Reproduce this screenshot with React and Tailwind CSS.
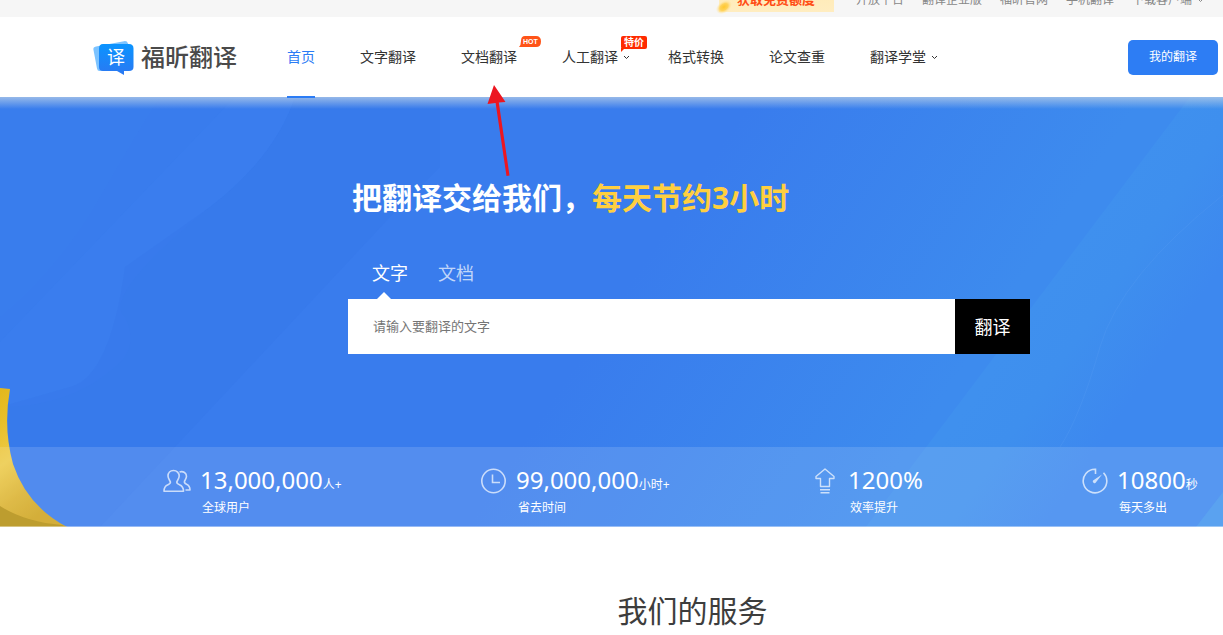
import React from 'react';

const topLinks = ['开放平台', '翻译企业版', '福昕官网', '手机翻译'];

const navItems = [
  { label: '首页', active: true },
  { label: '文字翻译' },
  { label: '文档翻译', badge: 'hot' },
  { label: '人工翻译', badge: 'sale', menu: true },
  { label: '格式转换' },
  { label: '论文查重' },
  { label: '翻译学堂', menu: true },
];

const stats = [
  { icon: UsersIcon, value: '13,000,000', unit: '人+', label: '全球用户' },
  { icon: ClockIcon, value: '99,000,000', unit: '小时+', label: '省去时间' },
  { icon: RiseIcon, value: '1200%', unit: '', label: '效率提升' },
  { icon: TimerIcon, value: '10800', unit: '秒', label: '每天多出' },
];

function UsersIcon() {
  return (
    <svg width="28" height="24" viewBox="0 0 28 24" fill="none" stroke="currentColor" strokeWidth="1.6" strokeLinejoin="round">
      <path d="M10.5 1.500C7.200 1.500 5 3.900 5 7.100C5 9.200 6.300 10.800 7.300 12.600C7.900 14.300 6.800 15 5 15.700C2.200 16.800 1 18.500 1 22.200H20.500C20.500 18.500 19.300 16.800 16.500 15.700C14.300 15 13.400 14.300 13.900 12.600C14.900 10.800 16.200 9.200 16.200 7.100C16.200 3.900 13.800 1.500 10.500 1.500Z" />
      <path d="M16.500 3C20.500 1.800 23.500 4.200 23.500 7.300C23.500 9.300 22.400 10.600 21.500 12.200C21 13.800 21.900 14.500 23.500 15.200C26 16.300 27 17.700 27 21H22.500" />
    </svg>
  );
}

function ClockIcon() {
  return (
    <svg width="26" height="26" viewBox="0 0 26 26" fill="none" stroke="currentColor" strokeWidth="1.6">
      <circle cx="12.500" cy="13" r="11.700" />
      <path d="M11.500 6.500V14.500H19" />
    </svg>
  );
}

function RiseIcon() {
  return (
    <svg width="24" height="26" viewBox="0 0 24 26" fill="none" stroke="currentColor" strokeWidth="1.4" strokeLinejoin="round">
      <path d="M10 1L19 8.500V10.500H14.500V18.500H5.500V10.500H1V8.500Z" />
      <path d="M5 21.800H15M5.500 24.800H14.500" />
    </svg>
  );
}

function TimerIcon() {
  return (
    <svg width="26" height="26" viewBox="0 0 26 26" fill="none" stroke="currentColor" strokeWidth="1.6">
      <path d="M13.500 6V1.200A11.800 11.800 0 1 0 21.500 4.800" />
      <path d="M20 6.500L11.800 12.100A1.600 1.600 0 1 0 14 14.200Z" fill="currentColor" stroke="none" />
    </svg>
  );
}

function Caret() {
  return (
    <svg className="ml-[5px] -mr-2 w-2" height="5" viewBox="0 0 8 5" fill="none" stroke="currentColor">
      <path d="M1 1L3.500 3.500L6 1" />
    </svg>
  );
}

function Logo() {
  return (
    <a href="#" className="flex items-center gap-[7px]">
      <svg width="41" height="36" viewBox="0 0 41 36">
        <defs>
          <linearGradient id="logoCard" x1="0" y1="0" x2="0" y2="1">
            <stop offset="0" stopColor="#0a94ff" />
            <stop offset="1" stopColor="#2b78f2" />
          </linearGradient>
        </defs>
        <path d="M3 7.500L31 2.200Q34 1.600 35 4.500L36 8V28L7 32Q4.500 32.300 4 29.500L.4 10.500Q0 8 3 7.500Z" fill="#7cc3ff" />
        <path d="M10 5H36Q40.500 5 40.500 9.500V28Q40.500 32 36 32H31V36L24 32H10Q6 32 6 28V9.500Q6 5 10 5Z" fill="url(#logoCard)" />
        <text x="14" y="25" fontSize="18" fill="#fff">译</text>
      </svg>
      <span className="text-2xl leading-8 font-medium text-[#4a4a4a]">福昕翻译</span>
    </a>
  );
}

function HotBadge() {
  return (
    <span className="absolute left-[58px] -top-[11px] h-[11px] w-[22px]">
      <svg className="absolute inset-0" width="22" height="11" viewBox="0 0 22 11">
        <path d="M6 0H17Q22 0 22 5.500T17 11H0Q2 9 2 5Q2 0 6 0Z" fill="#ff5418" />
      </svg>
      <span className="relative block pl-1 font-['Liberation_Sans',sans-serif] text-[7px] leading-[11px] font-bold text-white">HOT</span>
    </span>
  );
}

function SaleBadge() {
  return (
    <span className="absolute left-[59px] -top-[11px] h-[13px] w-[26px] rounded-xs bg-[#ff2a00] text-center text-[10px] leading-[13px] font-bold text-white">
      <svg className="absolute top-3 left-0" width="4" height="4" viewBox="0 0 4 4">
        <path d="M0 0H4L0 4Z" fill="#ff2a00" />
      </svg>
      <span className="relative">特价</span>
    </span>
  );
}

function TopBar() {
  return (
    <div className="flex h-[17px] items-end justify-end overflow-hidden bg-[#f6f6f6] pr-[26px] text-xs text-[#888]">
      <a href="#" className="relative mr-[22px] mb-[5px] flex h-[34px] w-[115px] shrink-0 items-center bg-linear-to-b from-[#ffe9b0] to-[#ffedc0] pt-[9px] pl-[18px] text-[13px] font-bold text-[#ff4d14]">
        <svg className="absolute -bottom-0.5 -left-1" width="20" height="14" viewBox="0 0 20 14">
          <defs>
            <radialGradient id="coin">
              <stop offset="0" stopColor="#ffc72e" />
              <stop offset="0.5" stopColor="#ffd35c" />
              <stop offset="1" stopColor="#ffe9b0" stopOpacity="0" />
            </radialGradient>
          </defs>
          <ellipse cx="9" cy="7" rx="9" ry="6" fill="url(#coin)" transform="rotate(-35 9 7)" />
        </svg>
        <span className="relative">获取免费额度</span>
      </a>
      <nav className="flex h-[34px] shrink-0 items-center gap-[18px]">
        {topLinks.map((label) => (
          <a key={label} href="#">{label}</a>
        ))}
        <a href="#" className="flex items-center">下载客户端<Caret /></a>
      </nav>
    </div>
  );
}

function Header() {
  return (
    <header className="flex h-20 items-center pr-[5px] pl-[93px]">
      <Logo />
      <nav className="ml-[50px] flex h-20 gap-[45px] text-sm text-[#333]">
        {navItems.map((item) => (
          <a
            key={item.label}
            href="#"
            className={
              item.active
                ? 'relative z-10 flex h-[81px] items-center border-b-2 border-[#2b7cf5] text-[#2b7cf5]'
                : 'flex items-center'
            }
          >
            <span className="relative">
              {item.label}
              {item.badge === 'hot' && <HotBadge />}
              {item.badge === 'sale' && <SaleBadge />}
            </span>
            {item.menu && <Caret />}
          </a>
        ))}
      </nav>
      <button type="button" className="ml-auto h-[35px] w-[90px] rounded-[5px] bg-[#2d7df4] text-xs text-white">
        我的翻译
      </button>
    </header>
  );
}

function HeroBackground() {
  return (
    <svg className="absolute inset-0 h-full w-full" viewBox="0 0 1223 430" preserveAspectRatio="none">
      <defs>
        <linearGradient id="heroBase" gradientUnits="userSpaceOnUse" x1="660" y1="140" x2="930" y2="320">
          <stop offset="0" stopColor="#397ced" />
          <stop offset="1" stopColor="#3d8bee" />
        </linearGradient>
        <linearGradient id="heroBand" gradientUnits="userSpaceOnUse" x1="1020" y1="230" x2="1130" y2="305">
          <stop offset="0" stopColor="#3f90ee" />
          <stop offset="0.4" stopColor="#3e8fee" />
          <stop offset="1" stopColor="#3d88ef" />
        </linearGradient>
        <linearGradient id="heroShadow" x1="0" y1="0" x2="0" y2="1">
          <stop offset="0" stopColor="#b5cde8" stopOpacity="0.75" />
          <stop offset="1" stopColor="#b5cde8" stopOpacity="0" />
        </linearGradient>
      </defs>
      <rect width="1223" height="430" fill="url(#heroBase)" />
      <path d="M0 220Q60 170 100 100T160 0H0Z" fill="#3b80f0" opacity="0.3" />
      <path d="M0 245L235 0H295Q275 60 210 110Q100 200 125 220Q140 250 115 270Q70 310 0 310Z" fill="#3c80f0" opacity="0.35" />
      <path d="M100 430L390 120L440 70V0H295Q275 60 210 110L125 170Q110 280 70 290L0 310V430Z" fill="#3475e8" opacity="0.25" />
      <path d="M1190 0H1223V430H866Z" fill="url(#heroBand)" />
      <path d="M1223 98Q1120 180 1100 250T1060 350" fill="none" stroke="#5aa0f5" opacity="0.25" />
      <path d="M1196 430L1223 395V430Z" fill="#46a0ee" opacity="0.5" />
      <rect width="1223" height="12" fill="url(#heroShadow)" />
    </svg>
  );
}

function Ribbon() {
  return (
    <svg className="absolute bottom-0 left-0" width="68" height="139" viewBox="0 0 68 139">
      <defs>
        <linearGradient id="ribbon" x1="0" y1="0" x2="0.35" y2="1">
          <stop offset="0" stopColor="#e3b71c" />
          <stop offset="0.22" stopColor="#e8bf28" />
          <stop offset="0.5" stopColor="#ecca48" />
          <stop offset="0.78" stopColor="#d9b02c" />
          <stop offset="1" stopColor="#cda21c" />
        </linearGradient>
      </defs>
      <path d="M0 0L10 1Q3 40 13 76Q27 118 67 139H0Z" fill="url(#ribbon)" />
      <path d="M0 118Q25 134 62 137L67 139H0Z" fill="#b38e10" />
    </svg>
  );
}

function Stats() {
  return (
    <ul className="relative grid h-20 grid-cols-[318fr_334fr_267fr_141fr] border-b border-white/40 bg-white/13 pl-[163px] text-white">
      {stats.map(({ icon: Icon, value, unit, label }) => (
        <li key={label} className="flex gap-[9px] pt-[17px]">
          <span className="flex h-[34px] items-center text-white/70"><Icon /></span>
          <div className="whitespace-nowrap">
            <p className="flex items-baseline text-2xl leading-8">
              {value}
              <span className="text-xs">{unit}</span>
            </p>
            <p className="pl-0.5 text-xs leading-6">{label}</p>
          </div>
        </li>
      ))}
    </ul>
  );
}

function Hero() {
  return (
    <section className="relative flex h-[430px] flex-col">
      <HeroBackground />
      <Ribbon />
      <div className="relative flex-1 pt-20 pr-[193px] pl-[348px]">
        <h1 className="pl-1 text-3xl leading-[42px] font-bold text-white">
          把翻译交给我们，<span className="text-[#ffcf3f]">每天节约3小时</span>
        </h1>
        <div className="mt-10 flex gap-[30px] pl-6 text-lg leading-7">
          <button type="button" className="relative h-10 pb-3.5 text-white">
            文字
            <svg className="absolute bottom-0 left-[5px]" width="14" height="7" viewBox="0 0 14 7">
              <path d="M7 0L14 7H0Z" fill="#fff" />
            </svg>
          </button>
          <button type="button" className="h-10 pb-3.5 text-white/70">文档</button>
        </div>
        <form className="flex h-[55px]">
          <input
            type="text"
            aria-label="请输入要翻译的文字"
            placeholder="请输入要翻译的文字"
            className="min-w-0 flex-1 bg-white pl-[25px] text-[13px] text-[#333] placeholder:text-[#757575]"
          />
          <button type="button" className="w-[75px] bg-black text-lg text-white">翻译</button>
        </form>
      </div>
      <Stats />
      {/* Pointer towards the document translation entry */}
      <svg className="absolute -top-3 left-[486px]" width="26" height="92" viewBox="0 0 26 92" fill="#ec1620">
        <path d="M8 0L19.500 17L12.800 17.500L23.500 90.500L20.500 91L9.600 18L1.500 19Z" />
      </svg>
    </section>
  );
}

export default function App() {
  return (
    <div className="overflow-x-hidden bg-white font-['Noto_Sans','Noto_Sans_CJK_SC',sans-serif]">
      <TopBar />
      <Header />
      <Hero />
      <section className="pt-[61px] pl-[162px] text-center">
        <h2 className="text-3xl leading-[46px] text-[#3d3d3d]">我们的服务</h2>
      </section>
    </div>
  );
}
